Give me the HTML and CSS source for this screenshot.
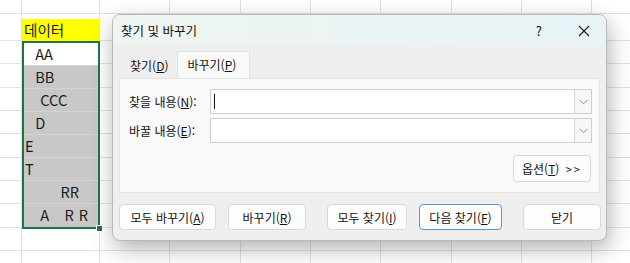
FILE: index.html
```html
<!DOCTYPE html>
<html lang="ko">
<head>
  <meta charset="UTF-8" />
  <title>찾기 및 바꾸기</title>
  <link rel="stylesheet" href="styles.css">
</head>
<body>
  <div class="sheet">
    <div class="col-b">
      <div class="header-cell">데이터</div>
      <div class="selection">
        <div class="cell active">  AA</div>
        <div class="cell">  BB</div>
        <div class="cell">   CCC</div>
        <div class="cell">  D</div>
        <div class="cell">E</div>
        <div class="cell">T</div>
        <div class="cell">       RR</div>
        <div class="cell">   A   R R</div>
        <span class="handle"></span>
      </div>
    </div>

    <div class="dialog">
      <div class="titlebar">
        <span class="title">찾기 및 바꾸기</span>
        <span class="help">?</span>
        <span class="close">
          <svg width="12" height="12" viewBox="0 0 12 12"><path d="M1 1 L11 11 M11 1 L1 11" stroke="#1b1b1b" stroke-width="1.1" fill="none"/></svg>
        </span>
      </div>

      <div class="tabs">
        <div class="tab">찾기(<u>D</u>)</div>
        <div class="tab active">바꾸기(<u>P</u>)</div>
      </div>

      <div class="panel">
        <div class="field">
          <label>찾을 내용(<u>N</u>):</label>
          <div class="combo">
            <span class="caret"></span>
            <span class="drop"><svg width="9" height="6" viewBox="0 0 9 6"><path d="M0.5 0.8 L4.5 4.8 L8.5 0.8" stroke="#8a8a8a" stroke-width="1" fill="none"/></svg></span>
          </div>
        </div>
        <div class="field">
          <label>바꿀 내용(<u>E</u>):</label>
          <div class="combo">
            <span class="drop"><svg width="9" height="6" viewBox="0 0 9 6"><path d="M0.5 0.8 L4.5 4.8 L8.5 0.8" stroke="#8a8a8a" stroke-width="1" fill="none"/></svg></span>
          </div>
        </div>
        <div class="options-row">
          <button class="btn options">옵션(<u>T</u>) <span class="more">&gt;&gt;</span></button>
        </div>
      </div>

      <div class="actions">
        <button class="btn replace-all">모두 바꾸기(<u>A</u>)</button>
        <button class="btn replace">바꾸기(<u>R</u>)</button>
        <button class="btn find-all">모두 찾기(<u>I</u>)</button>
        <button class="btn find-next">다음 찾기(<u>F</u>)</button>
        <button class="btn close-btn">닫기</button>
      </div>
    </div>
  </div>
</body>
</html>
```

FILE: styles.css
```css
body {
  margin: 0;
  font-family: "Noto Sans CJK KR", "Noto Sans", sans-serif;
  color: #1a1a1a;
}

.sheet {
  position: relative;
  width: 630px;
  height: 263px;
  overflow: hidden;
  background-color: #fff;
  background-image:
    linear-gradient(#e1e1e1, #e1e1e1),
    linear-gradient(#e1e1e1, #e1e1e1),
    repeating-linear-gradient(to bottom, #e1e1e1 0 1px, transparent 1px 23.33px),
    repeating-linear-gradient(to right, #e1e1e1 0 1px, transparent 1px 70.3px);
  background-position: 0 13px, 21px 0, 0 40px, 99px 0;
  background-size: 100% 1px, 1px 100%, 100% 100%, 100% 100%;
  background-repeat: no-repeat;
}

/* column B */
.col-b {
  margin-left: 22px;
  width: 78px;
  padding-top: 19px;
  font-size: 14.6px;
}

.header-cell {
  height: 22px;
  line-height: 22px;
  background: #ffff00;
  padding-left: 2px;
}

.selection {
  position: relative;
  box-sizing: border-box;
  height: 188px;
  border: 2px solid #217346;
  background: #c8c8c8;
}

.cell {
  box-sizing: border-box;
  height: 23px;
  line-height: 22px;
  padding-left: 1px;
  white-space: pre;
  word-spacing: 1px;
  border-bottom: 1px solid #d4d4d4;
}

.cell:last-of-type {
  border-bottom: none;
}

.cell.active {
  background: #fff;
}

.handle {
  position: absolute;
  right: -5px;
  bottom: -5px;
  width: 5px;
  height: 5px;
  background: #217346;
  border: 1px solid #fff;
}

/* dialog */
.dialog {
  position: absolute;
  left: 112px;
  top: 14px;
  box-sizing: border-box;
  width: 495px;
  height: 227px;
  background: #efefef;
  border: 1px solid #b9b9b9;
  border-radius: 8px;
  box-shadow: 2px 8px 22px rgba(0, 0, 0, 0.3);
  overflow: hidden;
  font-size: 12px;
  line-height: 16px;
  color: #111;
}

.titlebar {
  display: flex;
  align-items: center;
  height: 30px;
  padding-left: 8px;
  background: linear-gradient(to right, #eef5f1, #e8f3f7);
}

.title {
  flex: 1;
  font-size: 12.5px;
  padding-top: 2px;
}

.help {
  font-size: 13px;
  margin-right: 36px;
  padding-top: 2px;
}

.close {
  display: flex;
  margin-right: 16px;
  padding-top: 2px;
}

.tabs {
  display: flex;
  align-items: flex-end;
  height: 33px;
  padding-left: 6px;
}

.tab {
  height: 24px;
  line-height: 23px;
  padding: 0 9px 0 11px;
}

.tab.active {
  height: 26px;
  line-height: 25px;
  padding: 0 9px;
  width: 53px;
  background: #f9f9f9;
  border: 1px solid #e3e3e3;
  border-bottom: none;
}

.panel {
  box-sizing: border-box;
  height: 115px;
  margin: 0 6px 0 6px;
  padding: 10px 7px 0 9px;
  background: #f9f9f9;
  border: 1px solid #e3e3e3;
}

.field {
  display: flex;
  align-items: center;
  margin-bottom: 4px;
}

.field label {
  width: 81px;
}

.combo {
  position: relative;
  display: flex;
  justify-content: flex-end;
  flex: 1;
  box-sizing: border-box;
  height: 25px;
  background: #fff;
  border: 1px solid #cfcfcf;
}

.caret {
  position: absolute;
  left: 3px;
  top: 4px;
  width: 1px;
  height: 15px;
  background: #111;
}

.drop {
  display: flex;
  align-items: center;
  justify-content: center;
  width: 16px;
  background: #f7f7f7;
  border-left: 1px solid #d6d6d6;
}

.options-row {
  display: flex;
  justify-content: flex-end;
  padding-top: 8px;
  padding-right: 1px;
}

.btn {
  box-sizing: border-box;
  height: 26px;
  padding: 0;
  font-family: inherit;
  font-size: 12px;
  color: #111;
  background: #fdfdfd;
  border: 1px solid #d8d8d8;
  border-radius: 4px;
}

.btn.options {
  width: 78px;
  height: 27px;
  word-spacing: 3px;
}

.more {
  letter-spacing: 2px;
  font-size: 11px;
}

.actions {
  display: flex;
  padding: 11px 0 0 6px;
}

.replace-all { width: 97px; }
.replace { width: 78px; margin-left: 12px; }
.find-all { width: 80px; margin-left: 21px; }
.find-next { width: 83px; margin-left: 12px; border-color: #4f97dc; }
.close-btn { width: 78px; margin-left: 21px; }
```
